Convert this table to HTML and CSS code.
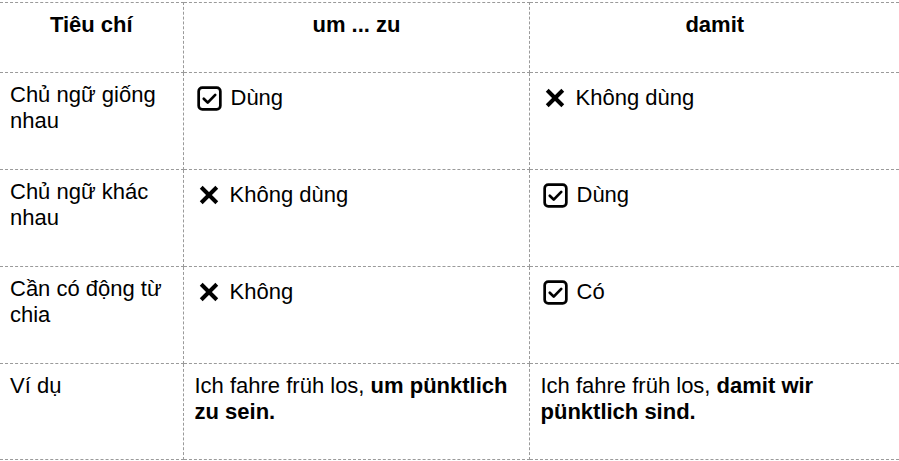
FILE: index.html
```html
<!DOCTYPE html>
<html lang="vi">
<head>
<meta charset="utf-8">
<title>um ... zu vs damit</title>
<link rel="stylesheet" href="styles.css">
</head>
<body>
<table class="cmp">
  <colgroup>
    <col class="c1"><col class="c2"><col class="c3">
  </colgroup>
  <thead>
    <tr class="head">
      <th>Tiêu chí</th>
      <th>um ... zu</th>
      <th>damit</th>
    </tr>
  </thead>
  <tbody>
    <tr class="row">
      <td>Chủ ngữ giống nhau</td>
      <td><span class="mark"><svg class="ico chk" viewBox="0 0 24 24"><rect x="1.6" y="1.6" width="20.8" height="20.8" rx="3.5"/><path d="M6.5 12.2l3.8 3.8 7.2-7.5"/></svg>Dùng</span></td>
      <td><span class="mark"><svg class="ico x" viewBox="0 0 24 24"><path d="M3.5 3.5l17 17M20.5 3.5l-17 17"/></svg>Không dùng</span></td>
    </tr>
    <tr class="row">
      <td>Chủ ngữ khác nhau</td>
      <td><span class="mark"><svg class="ico x" viewBox="0 0 24 24"><path d="M3.5 3.5l17 17M20.5 3.5l-17 17"/></svg>Không dùng</span></td>
      <td><span class="mark"><svg class="ico chk" viewBox="0 0 24 24"><rect x="1.6" y="1.6" width="20.8" height="20.8" rx="3.5"/><path d="M6.5 12.2l3.8 3.8 7.2-7.5"/></svg>Dùng</span></td>
    </tr>
    <tr class="row">
      <td>Cần có động từ chia</td>
      <td><span class="mark"><svg class="ico x" viewBox="0 0 24 24"><path d="M3.5 3.5l17 17M20.5 3.5l-17 17"/></svg>Không</span></td>
      <td><span class="mark"><svg class="ico chk" viewBox="0 0 24 24"><rect x="1.6" y="1.6" width="20.8" height="20.8" rx="3.5"/><path d="M6.5 12.2l3.8 3.8 7.2-7.5"/></svg>Có</span></td>
    </tr>
    <tr class="row last">
      <td>Ví dụ</td>
      <td><p class="ex">Ich fahre früh los, <b>um pünktlich zu sein.</b></p></td>
      <td><p class="ex">Ich fahre früh los, <b>damit wir pünktlich sind.</b></p></td>
    </tr>
  </tbody>
</table>
</body>
</html>
```
FILE: styles.css
```css
html, body {
  margin: 0;
  padding: 0;
  background: #fff;
}
body {
  font-family: "Liberation Sans", Arial, sans-serif;
  font-size: 22px;
  color: #000;
  overflow: hidden;
}
.cmp {
  margin-top: 2px;
  border-collapse: collapse;
  table-layout: fixed;
  width: 899px;
}
.c1 { width: 183px; }
.c2 { width: 346px; }
.c3 { width: 370px; }
.cmp th, .cmp td {
  border: 1px dashed #9a9a9a;
  padding: 9px 10px 10px 11px;
  vertical-align: top;
  text-align: left;
  line-height: 26px;
}
.cmp th:first-child, .cmp td:first-child {
  border-left: none;
  padding-left: 10px;
}
.cmp th:last-child, .cmp td:last-child {
  border-right: none;
}
.cmp th {
  font-weight: bold;
  text-align: center;
}
.head { height: 70px; }
.row { height: 97px; }
.row.last { height: 96px; }
.ex {
  margin: 0;
}
.mark {
  display: inline-flex;
  align-items: center;
  gap: 9px;
  padding: 3px 0 0 2px;
}
.ico {
  width: 25px;
  height: 25px;
  flex: none;
  fill: none;
  stroke: #000;
}
.chk {
  stroke-width: 2.6;
  stroke-linecap: round;
  stroke-linejoin: round;
}
.x {
  width: 24px;
  height: 22px;
  stroke-width: 4.4;
  stroke-linecap: butt;
}
```
